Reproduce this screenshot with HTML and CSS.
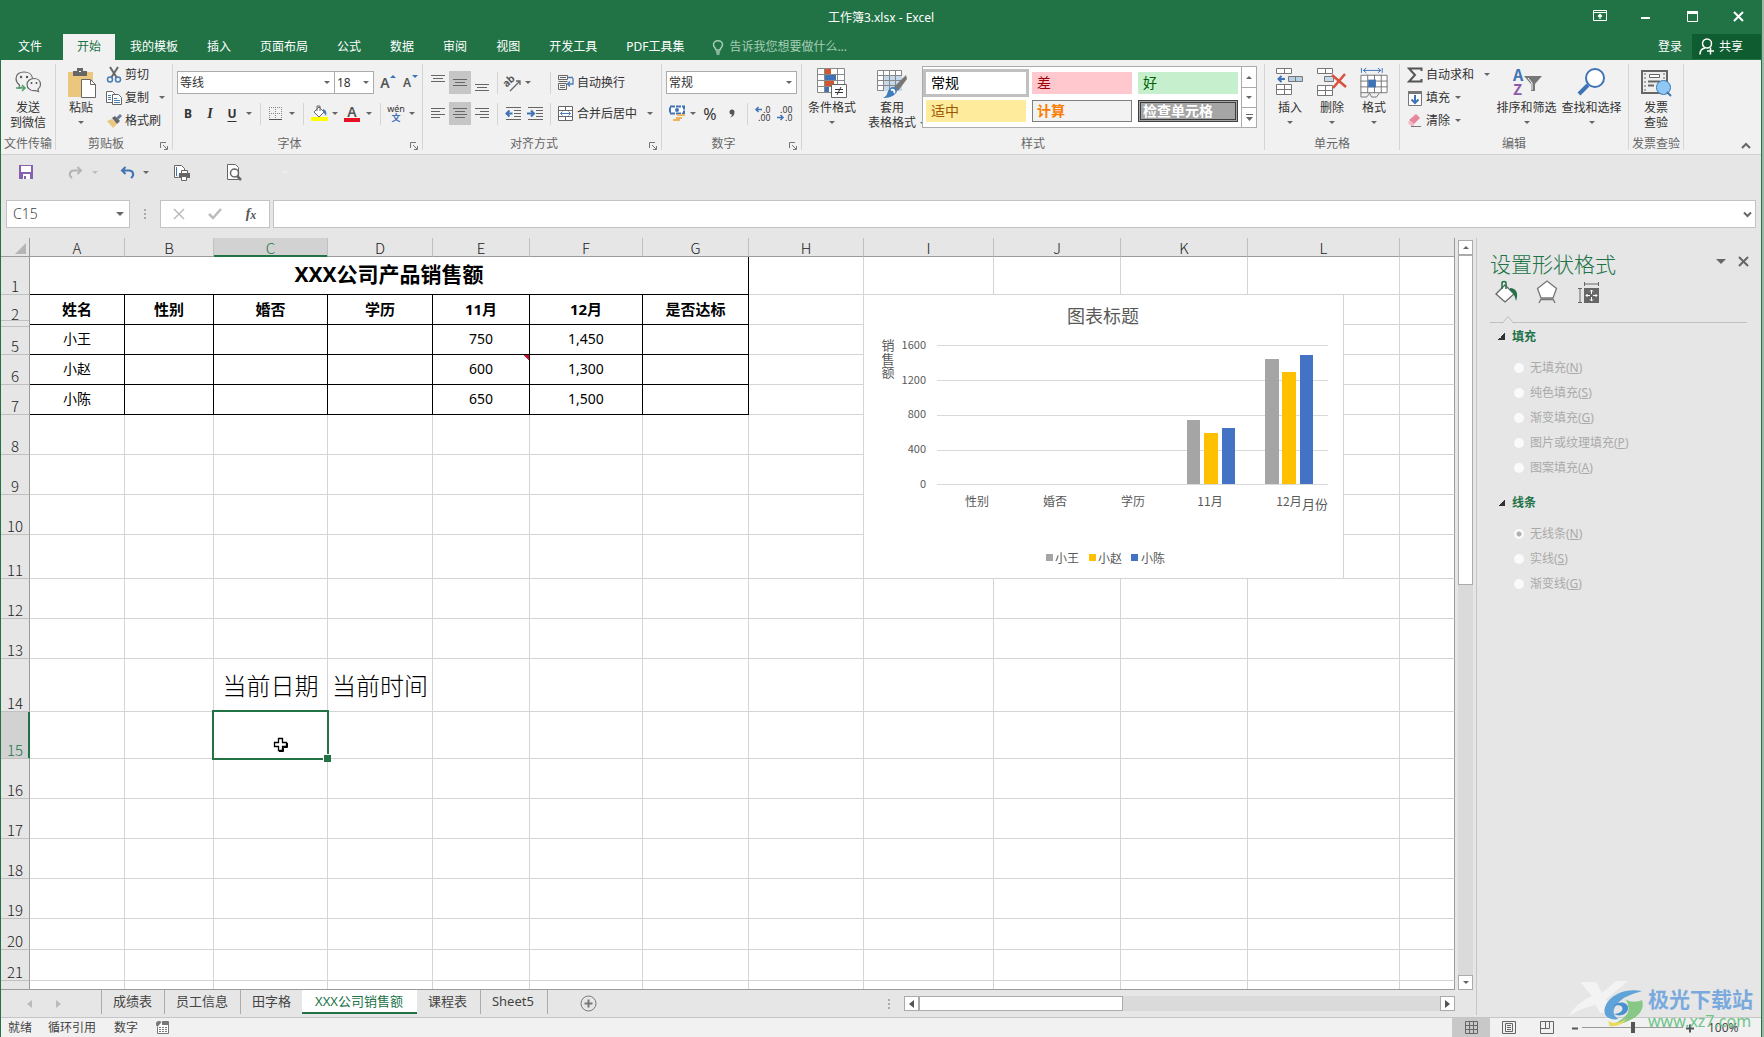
FILE: index.html
```html
<!DOCTYPE html>
<html lang="zh-CN">
<head>
<meta charset="utf-8">
<title>工作簿3.xlsx - Excel</title>
<link rel="stylesheet" href="styles.css">
</head>
<body>
<div class="app">

<header class="titlebar">
  <h1 class="doc-title">工作簿3.xlsx - Excel</h1>
  <div class="window-buttons">
    <button class="win-btn" aria-label="功能区显示选项"><svg width="14" height="12" viewBox="0 0 14 12"><path d="M.5.5h13v10H.5zM.5 2.5h13" fill="none" stroke="#fff"/><path d="M7 9V5M5 6.500l2-2 2 2" fill="none" stroke="#fff" stroke-width="1.300"/></svg></button>
    <button class="win-btn" aria-label="最小化"><svg width="10" height="12" viewBox="0 0 10 12"><path d="M0 8h9" stroke="#fff" stroke-width="2"/></svg></button>
    <button class="win-btn" aria-label="最大化"><svg width="11" height="11" viewBox="0 0 11 11"><path d="M.5 .5h10v10H.5z" fill="none" stroke="#fff"/><path d="M0 1.500h11" stroke="#fff" stroke-width="3"/></svg></button>
    <button class="win-btn" aria-label="关闭"><svg width="11" height="11" viewBox="0 0 11 11"><path d="M1 1l9 9M10 1l-9 9" stroke="#fff" stroke-width="2"/></svg></button>
  </div>
</header>

<nav class="tabs">
  <button class="tab tab-file">文件</button>
  <button class="tab tab-active">开始</button>
  <button class="tab">我的模板</button>
  <button class="tab">插入</button>
  <button class="tab">页面布局</button>
  <button class="tab">公式</button>
  <button class="tab">数据</button>
  <button class="tab">审阅</button>
  <button class="tab">视图</button>
  <button class="tab">开发工具</button>
  <button class="tab">PDF工具集</button>
  <button class="tell-me"><svg width="12" height="15" viewBox="0 0 12 15" fill="none" stroke="#a5cdb5" stroke-width="1.500"><path d="M4 10c0-2-2.500-2.700-2.500-5.300a4.500 4 0 0 1 9 0C10.500 7.300 8 8 8 10zM4 12h4M4.500 14h3"/></svg>告诉我您想要做什么...</button>
  <button class="login">登录</button>
  <button class="share"><svg width="16" height="17" viewBox="0 0 16 17" fill="none" stroke="#fff" stroke-width="1.500"><circle cx="8" cy="5.500" r="4.500"/><path d="M1 16.500c0-4 2-6 5-6.500M8 13h7M11.500 9.500v7"/></svg>共享</button>
</nav>

<section class="ribbon">
  <div class="group g-wechat">
    <div class="group-body center">
      <button class="big">
        <svg width="30" height="30" viewBox="0 0 30 30" fill="none" stroke="#666" stroke-width="1.200"><path d="M9 19l-3 1 .5-3C4 15 3 13 3 10.500 3 6 7 4 11 4c4.500 0 8 2.500 8.500 6"/><path d="M14 16.500c0-3.500 3-6 7-6s6.500 2.500 6.500 6c0 2-1 3.500-2.500 4.500l.5 2.500-3-1c-4.500 1-8.500-2-8.500-6z"/><path d="M3 20h9M9 17l3 3-3 3" stroke="#4fa26d" stroke-width="1.600"/><g fill="#555" stroke="none"><circle cx="8" cy="9" r="1.200"/><circle cx="14" cy="9" r="1.200"/><circle cx="18.500" cy="15" r="1"/><circle cx="23.500" cy="15" r="1"/></g></svg>
        <span>发送<br>到微信</span></button>
    </div>
    <div class="group-label">文件传输</div>
  </div>

  <div class="group g-clip">
    <div class="group-body">
      <button class="big w50">
        <svg width="30" height="30" viewBox="0 0 30 30"><path d="M2 4h25v25H2z" fill="#ebc67d"/><path d="M7 3h4V0h6v3h4v5H7z" fill="#666"/><path d="M13 3.500h2" stroke="#fff"/><path d="M15.500 11.500h9l5 5v13h-14z" fill="#fff" stroke="#666"/><path d="M24.500 11.500v5h5" fill="none" stroke="#666"/></svg>
        <span>粘贴</span><i class="caret"></i></button>
      <div class="stack">
        <button class="small"><svg width="16" height="16" viewBox="0 0 16 16" fill="none"><path d="M4 0l7 11M12 0L5 11" stroke="#666" stroke-width="2"/><circle cx="4" cy="12.500" r="2.500" stroke="#4a7db5" stroke-width="1.500"/><circle cx="12" cy="12.500" r="2.500" stroke="#4a7db5" stroke-width="1.500"/></svg>剪切</button>
        <button class="small"><svg width="16" height="16" viewBox="0 0 16 16" fill="#fff" stroke="#666"><path d="M.5 1.500h6l2 2v9h-8z"/><path d="M6.500 4.500h6l3 3v7h-9z"/><path d="M2 5.500h3M2 7.500h3M2 9.500h3M8 8.500h3M8 10.500h6M8 12.500h6" stroke="#4a7db5"/></svg>复制<i class="caret far"></i></button>
        <button class="small"><svg width="16" height="16" viewBox="0 0 16 16"><path d="M1 8l5-2 5 5-4 4z" fill="#ebc67d"/><path d="M6 5l3-2 5 5-3 3z" fill="#666"/><path d="M10 5l4-4 2 2-4 4z" fill="#667a99"/></svg>格式刷</button>
      </div>
    </div>
    <div class="group-label with-launcher">剪贴板<button class="launcher" aria-label="剪贴板选项"><svg width="8" height="8" viewBox="0 0 8 8" fill="none" stroke="#777"><path d="M.5 6V.5H6M3 3l4 4M7.500 4v3.500H4"/></svg></button></div>
  </div>

  <div class="group g-font">
    <div class="group-body rows">
      <div class="row">
        <label class="combo c-font"><select aria-label="字体"><option>等线</option></select><i class="caret"></i></label>
        <label class="combo c-size"><select aria-label="字号"><option>18</option></select><i class="caret"></i></label>
        <button class="ib grow" aria-label="增大字号"><span class="fa">A</span><i class="mark up"></i></button>
        <button class="ib grow" aria-label="减小字号"><span class="fa fs">A</span><i class="mark down"></i></button>
      </div>
      <div class="row">
        <button class="ib bold">B</button><button class="ib ital">I</button><button class="ib und">U</button><button class="dd" aria-label="下划线选项"><i class="caret"></i></button>
        <i class="sep"></i>
        <button class="ib w20" aria-label="边框"><svg width="14" height="14" viewBox="0 0 14 14" fill="none" stroke="#888" stroke-dasharray="1 1"><path d="M.5 0v13M6.500 0v13M12.500 0v13M0 .5h13M0 6.500h13"/><path d="M0 12.500h13" stroke="#555" stroke-dasharray="none"/></svg></button><button class="dd" aria-label="边框选项"><i class="caret"></i></button>
        <i class="sep"></i>
        <button class="ib w20" aria-label="填充颜色"><svg width="17" height="17" viewBox="0 0 17 17"><path d="M3 7l5-5 5 5-5 5z" fill="#fff" stroke="#666"/><path d="M6 6V1h3v5" fill="none" stroke="#666"/><path d="M12 4c3 1 4 3 3 7-1-2-2-3-3-4z" fill="#4a7db5"/><path d="M0 12h17v4H0z" fill="#ff0"/></svg></button><button class="dd" aria-label="填充颜色选项"><i class="caret"></i></button>
        <button class="ib" aria-label="字体颜色"><span class="fa font-color">A</span></button><button class="dd" aria-label="字体颜色选项"><i class="caret"></i></button>
        <i class="sep"></i>
        <button class="ib w20 wen"><span>wén</span><b>文</b></button><button class="dd" aria-label="拼音选项"><i class="caret"></i></button>
      </div>
    </div>
    <div class="group-label with-launcher">字体<button class="launcher" aria-label="字体选项"><svg width="8" height="8" viewBox="0 0 8 8" fill="none" stroke="#777"><path d="M.5 6V.5H6M3 3l4 4M7.500 4v3.500H4"/></svg></button></div>
  </div>

  <div class="group g-align">
    <div class="group-body rows">
      <div class="row">
        <button class="ib" aria-label="顶端对齐"><svg width="14" height="16" viewBox="0 0 14 16" stroke="#666"><path d="M0 .5h14M2 3.500h10M0 6.500h14"/></svg></button><button class="ib on" aria-label="垂直居中"><svg width="14" height="16" viewBox="0 0 14 16" stroke="#666"><path d="M0 4.500h14M2 7.500h10M0 10.500h14"/></svg></button><button class="ib" aria-label="底端对齐"><svg width="14" height="16" viewBox="0 0 14 16" stroke="#666"><path d="M0 9.500h14M2 12.500h10M0 15.500h14"/></svg></button>
        <i class="sep s9"></i>
        <span class="pair"><button class="ib" aria-label="方向"><svg width="18" height="18" viewBox="0 0 18 18"><text x="1" y="12" transform="rotate(-42 4 11)" font-size="10" font-weight="bold" fill="#555">ab</text><path d="M6 17L16 7M16 11V7h-4" fill="none" stroke="#666" stroke-width="1.300"/></svg></button><button class="dd w8" aria-label="方向选项"><i class="caret"></i></button></span>
        <i class="sep s9"></i>
        <button class="small inrow"><svg width="16" height="16" viewBox="0 0 16 16" fill="none" stroke="#666"><path d="M.5 .5h9v4h-9zM.5 8.500h8v6h-8zM2 2.500h6M2 10.500h5M2 12.500h5M.5 6.500h9"/><path d="M15 3v6H10M12 6.500L9.500 9l2.500 2.500M10 2.500h5" stroke="#4a7db5" stroke-width="1.300"/></svg>自动换行</button>
      </div>
      <div class="row">
        <button class="ib" aria-label="左对齐"><svg width="14" height="11" viewBox="0 0 14 11" stroke="#666"><path d="M0 .5h14M0 3.500h9M0 6.500h14M0 9.500h9"/></svg></button><button class="ib on" aria-label="居中"><svg width="14" height="11" viewBox="0 0 14 11" stroke="#666"><path d="M0 .5h14M2 3.500h10M0 6.500h14M2 9.500h10"/></svg></button><button class="ib" aria-label="右对齐"><svg width="14" height="11" viewBox="0 0 14 11" stroke="#666"><path d="M0 .5h14M5 3.500h9M0 6.500h14M5 9.500h9"/></svg></button>
        <i class="sep s9"></i>
        <span class="pair"><button class="ib" aria-label="减少缩进"><svg width="17" height="14" viewBox="0 0 17 14" stroke="#666"><path d="M1 .5h15M9 3.500h7M9 6.500h7M9 9.500h7M1 12.500h15"/><path d="M7.500 6.500H2M4.500 3.500l-3 3 3 3" fill="none" stroke="#3f73b5" stroke-width="2"/></svg></button><button class="ib" aria-label="增加缩进"><svg width="17" height="14" viewBox="0 0 17 14" stroke="#666"><path d="M1 .5h15M9 3.500h7M9 6.500h7M9 9.500h7M1 12.500h15"/><path d="M0 6.500h6M4 3.500l3 3-3 3" fill="none" stroke="#3f73b5" stroke-width="2"/></svg></button></span>
        <i class="sep s9"></i>
        <button class="small inrow"><svg width="16" height="16" viewBox="0 0 16 16" fill="#fff" stroke="#666"><path d="M.5 .5h14v14H.5zM.5 4.500h14M.5 10.500h14M7.500 .5v4M7.500 10.500v4"/><path d="M2.500 7.500h10M4.500 5.500l-2 2 2 2M10.500 5.500l2 2-2 2" fill="none" stroke="#4a7db5"/></svg>合并后居中<i class="caret near"></i></button>
      </div>
    </div>
    <div class="group-label with-launcher">对齐方式<button class="launcher" aria-label="对齐选项"><svg width="8" height="8" viewBox="0 0 8 8" fill="none" stroke="#777"><path d="M.5 6V.5H6M3 3l4 4M7.500 4v3.500H4"/></svg></button></div>
  </div>

  <div class="group g-num">
    <div class="group-body rows">
      <div class="row">
        <label class="combo c-num"><select aria-label="数字格式"><option>常规</option></select><i class="caret"></i></label>
      </div>
      <div class="row">
        <button class="ib" aria-label="会计数字格式"><svg width="17" height="17" viewBox="0 0 17 17"><path d="M1 1.500h14v7H1z" fill="#fff" stroke="#3f73b5" stroke-width="2" stroke-dasharray="5 1"/><circle cx="8" cy="5" r="2" fill="#3f73b5"/><path d="M8 9h8v2H8zM7 12h6v2H7zM4 14h7v2H4z" fill="#ebb663"/></svg></button><button class="dd w10" aria-label="会计格式选项"><i class="caret"></i></button>
        <button class="ib w24 pct">%</button><button class="ib w20" aria-label="千位分隔样式"><svg width="6" height="9" viewBox="0 0 6 9"><path d="M5.500 3C5.500 6 4 8 1 8.500 2.500 7.500 3 6.500 3 5.500A2.500 2.500 0 1 1 5.500 3z" fill="#555"/></svg></button>
        <i class="sep s10"></i>
        <button class="ib" aria-label="增加小数位数"><svg width="18" height="18" viewBox="0 0 18 18"><path d="M8 4.500H2M4.500 2L2 4.500 4.500 7" fill="none" stroke="#3f73b5" stroke-width="1.500"/><text x="9" y="8" font-size="9" fill="#444">.0</text><text x="4" y="16" font-size="9" fill="#444">.00</text></svg></button><button class="ib" aria-label="减少小数位数"><svg width="18" height="18" viewBox="0 0 18 18"><path d="M1 12.500h6M4.500 10L7 12.500 4.500 15" fill="none" stroke="#3f73b5" stroke-width="1.500"/><text x="4" y="8" font-size="9" fill="#444">.00</text><text x="9" y="16" font-size="9" fill="#444">.0</text></svg></button>
      </div>
    </div>
    <div class="group-label with-launcher">数字<button class="launcher" aria-label="数字选项"><svg width="8" height="8" viewBox="0 0 8 8" fill="none" stroke="#777"><path d="M.5 6V.5H6M3 3l4 4M7.500 4v3.500H4"/></svg></button></div>
  </div>

  <div class="group g-style">
    <div class="group-body">
      <button class="big w60">
        <svg width="30" height="30" viewBox="0 0 30 30"><path d="M.5 .5h27v24H.5z" fill="#fff" stroke="#888"/><path d="M7.500 0v25M20.500 0v25M0 6.500h28M0 12.500h28M0 18.500h28" stroke="#888"/><path d="M8 1h6v5H8zM8 13h9v5H8z" fill="#d2572f"/><path d="M8 7h11v5H8zM8 19h4v5H8z" fill="#3f73b5"/><path d="M14.500 16.500h15v13h-15z" fill="#fff" stroke="#666"/><path d="M18 21.500h8M18 24.500h8M24 19l-4 8" stroke="#333"/></svg>
        <span>条件格式</span><i class="caret"></i></button>
      <button class="big w60">
        <svg width="30" height="30" viewBox="0 0 30 30"><path d="M.5 2.500h24v20H.5z" fill="#fff" stroke="#888"/><path d="M7 8h18v15H7z" fill="#c5d9ec"/><path d="M6.500 2v21M12.500 2v21M18.500 2v21M0 7.500h25M0 12.500h25M0 17.500h25" stroke="#888"/><path d="M29 7L17 19l4 4 9-12z" fill="#777"/><path d="M16 19c4 0 5 4 3 6-3 4-8 5-13 5 4-2 4-4 5-7 1-2 3-4 5-4z" fill="#3f7dba"/><path d="M14 22c3-1 4 1 3 3" stroke="#fff" stroke-width="2" fill="none"/></svg>
        <span>套用<br>表格格式<i class="caret side"></i></span></button>
      <div class="gallery">
        <div class="swatches">
          <button class="sw sw-normal">常规</button><button class="sw sw-bad">差</button><button class="sw sw-good">好</button>
          <button class="sw sw-neutral">适中</button><button class="sw sw-calc">计算</button><button class="sw sw-check">检查单元格</button>
        </div>
        <div class="gallery-scroll">
          <button aria-label="上一行"><i class="caret flip"></i></button><button aria-label="下一行"><i class="caret"></i></button><button aria-label="更多"><svg width="7" height="7" viewBox="0 0 7 7" fill="#666"><path d="M0 0h7v1H0zM0 3h7L3.500 7z"/></svg></button>
        </div>
      </div>
    </div>
    <div class="group-label">样式</div>
  </div>

  <div class="group g-cells">
    <div class="group-body">
      <button class="big w42">
        <svg width="28" height="30" viewBox="0 0 28 30" fill="#fff" stroke="#777"><path d="M.5 .5h15v5H.5zM8.500 .5v5M.5 16.500h15v10H.5zM8.500 16.500v10M.5 21.500h15"/><path d="M12.500 8.500h14v5h-14zM19.500 8.500v5" fill="#b8d0e4"/><path d="M9 11H3M5.500 8L2.500 11l3 3" stroke="#3f73b5" stroke-width="2" fill="none"/></svg>
        <span>插入</span><i class="caret"></i></button>
      <button class="big w42">
        <svg width="30" height="30" viewBox="0 0 30 30" fill="#fff" stroke="#777"><path d="M.5 .5h15v5H.5zM8.500 .5v5M.5 17.500h15v10H.5zM8.500 17.500v10M.5 22.500h15"/><path d="M7.500 8.500h9v5h-9z" fill="#c5d9ec"/><path d="M15 7l14 12M28 6L16 20" stroke="#d9503c" stroke-width="2.500"/></svg>
        <span>删除</span><i class="caret"></i></button>
      <button class="big w42">
        <svg width="28" height="31" viewBox="0 0 28 31" fill="none" stroke="#777"><path d="M.5 7.500h27v18H.5z" fill="#fff"/><path d="M7.500 7v19M14.500 7v19M21.500 7v19M0 13.500h28M0 19.500h28"/><path d="M.5 25v5h6l3-4 2 4h5l3-4"/><path d="M8 12h8v8H8z" fill="#3f73b5" stroke="none"/><path d="M1 0v5M22.500 0v5M3 2.500h18M6 0L3 2.500 6 5M18 0l3 2.500L18 5" stroke="#3f73b5"/></svg>
        <span>格式</span><i class="caret"></i></button>
    </div>
    <div class="group-label">单元格</div>
  </div>

  <div class="group g-edit">
    <div class="group-body">
      <div class="stack">
        <button class="small"><svg width="16" height="16" viewBox="0 0 16 16"><path d="M14.500 4V1.500H2L8 8l-6 6.500h12.500V12" fill="none" stroke="#555" stroke-width="2"/></svg>自动求和<i class="caret near"></i></button>
        <button class="small"><svg width="16" height="16" viewBox="0 0 16 16"><path d="M1.500 1.500h13v14h-13z" fill="#fff" stroke="#777"/><path d="M1 1h14v3H1z" fill="#777"/><path d="M8 5v8M4.500 9.500L8 13l3.500-3.500" fill="none" stroke="#3f73b5" stroke-width="2"/></svg>填充<i class="caret"></i></button>
        <button class="small"><svg width="16" height="16" viewBox="0 0 16 16"><path d="M9 1l4 4-6 6-5-4z" fill="#e6879b"/><path d="M2 7.500L1 10l3 3h3V11z" fill="#f2b9c4"/><path d="M4 13.500h10" stroke="#777"/></svg>清除<i class="caret"></i></button>
      </div>
      <button class="big w65">
        <svg width="30" height="30" viewBox="0 0 30 30"><text x="1" y="13" font-size="16" font-weight="bold" fill="#3f73b5">A</text><text x="1" y="27" font-size="15" font-weight="bold" fill="#9058a8">Z</text><path d="M12 8h18l-7 8v7h-4v-7z" fill="#777"/><path d="M16 10l4 5v7" stroke="#fff" fill="none"/></svg>
        <span>排序和筛选</span><i class="caret"></i></button>
      <button class="big w65">
        <svg width="30" height="30" viewBox="0 0 30 30"><circle cx="18" cy="10" r="9" fill="#fff" stroke="#3f73b5" stroke-width="2"/><path d="M11 17L2 26" stroke="#3f73b5" stroke-width="4"/></svg>
        <span>查找和选择</span><i class="caret"></i></button>
    </div>
    <div class="group-label">编辑</div>
  </div>

  <div class="group g-inv">
    <div class="group-body center">
      <button class="big">
        <svg width="32" height="30" viewBox="0 0 32 30"><path d="M2 3h25v22H2z" fill="#eee" stroke="#666" stroke-width="2"/><path d="M5 5v19M24 5v10" stroke="#666" stroke-dasharray="2 2"/><path d="M9.500 6.500h10v3h-10z" fill="#fff" stroke="#666"/><path d="M8 13.500h12M8 17.500h6" stroke="#666" stroke-width="2"/><circle cx="23.500" cy="19.500" r="7" fill="#8fc8f5" stroke="#3f73b5"/><path d="M27 24l4 4" stroke="#3f73b5" stroke-width="2"/></svg>
        <span>发票<br>查验</span></button>
    </div>
    <div class="group-label">发票查验</div>
  </div>
  <button class="collapse" aria-label="折叠功能区"><svg width="10" height="7" viewBox="0 0 10 7"><path d="M1 6l4-4 4 4" fill="none" stroke="#666" stroke-width="2"/></svg></button>
</section>

<div class="quickbar">
  <button class="q q-save" aria-label="保存"><svg width="14" height="14" viewBox="0 0 14 14"><path d="M0 0h14v14H0z" fill="#8661ad"/><path d="M2 1h10v6H2zM4 9h7v5H4z" fill="#fff"/><path d="M5 11h2v3H5z" fill="#8661ad"/></svg></button>
  <button class="q q-redo" aria-label="恢复"><svg width="15" height="13" viewBox="0 0 15 13" fill="none" stroke="#b5b5b5" stroke-width="2"><path d="M13 4.500H6C2 4.500 0 9 4 12M9.500 1L13 4.500 9.500 8"/></svg></button><i class="caret pale"></i>
  <button class="q q-undo" aria-label="撤消"><svg width="15" height="13" viewBox="0 0 15 13" fill="none" stroke="#3f73b5" stroke-width="2"><path d="M2 4.500h7c4 0 6 4.500 2 7.500M5.500 1L2 4.500 5.500 8"/></svg></button><i class="caret"></i>
  <button class="q q-print" aria-label="快速打印"><svg width="17" height="17" viewBox="0 0 17 17" fill="#fff" stroke="#666"><path d="M1.500 13.500V1.500h7l3 3v3"/><path d="M1.500 13.500h4" /><path d="M3.500 3v9" stroke="#3f73b5"/><path d="M6 9h11v5H6z" fill="#666" stroke="none"/><path d="M8.500 6.500h6v3h-6zM8.500 12.500h5v4h-5z"/></svg></button>
  <button class="q q-preview" aria-label="打印预览"><svg width="15" height="17" viewBox="0 0 15 17" fill="#fff" stroke="#666"><path d="M.5 15.500V.5h8l3 3v12z"/><circle cx="7.500" cy="9" r="4" stroke-width="1.500"/><path d="M10 12l4 4" stroke-width="2.500"/></svg></button>
  <i class="caret ghost"></i>
</div>

<div class="formulabar">
  <label class="namebox"><input aria-label="名称框" value="C15"><i class="caret"></i></label>
  <i class="dots"></i>
  <div class="fx-box">
    <button aria-label="取消"><svg width="12" height="12" viewBox="0 0 12 12"><path d="M1 1l10 10M11 1L1 11" stroke="#bbb" stroke-width="1.500"/></svg></button>
    <button aria-label="输入"><svg width="14" height="12" viewBox="0 0 14 12"><path d="M1 6l4 4 8-9" fill="none" stroke="#bbb" stroke-width="2.500"/></svg></button>
    <button class="fx" aria-label="插入函数">f<sub>x</sub></button>
  </div>
  <label class="formula"><input aria-label="编辑栏"><svg width="9" height="7" viewBox="0 0 9 7"><path d="M1 1.500l3.500 3.500L8 1.500" fill="none" stroke="#666" stroke-width="2"/></svg></label>
</div>

<main class="workspace">
  <div class="book">
    <div class="sheet-row">
      <div class="sheet">
        <table class="grid">
          <colgroup><col class="c-head"><col class="c-a"><col class="c-b"><col class="c-c"><col class="c-d"><col class="c-e"><col class="c-f"><col class="c-g"><col class="c-h"><col class="c-i"><col class="c-j"><col class="c-k"><col class="c-l"><col></colgroup>
          <thead><tr><th class="corner"><svg width="11" height="11" viewBox="0 0 11 11"><path d="M11 0v11H0z" fill="#b5b5b5"/></svg></th><th>A</th><th>B</th><th class="sel">C</th><th>D</th><th>E</th><th>F</th><th>G</th><th>H</th><th>I</th><th>J</th><th>K</th><th>L</th><th></th></tr></thead>
          <tbody>
          <tr class="h38 data"><th>1</th><td colspan="7" class="title">XXX公司产品销售额</td><td></td><td></td><td></td><td></td><td></td><td></td></tr>
          <tr class="h30 data heads"><th class="hidden-after">2</th><td>姓名</td><td>性别</td><td>婚否</td><td>学历</td><td>11月</td><td>12月</td><td>是否达标</td><td></td><td></td><td></td><td></td><td></td><td></td></tr>
          <tr class="h30 data"><th>5</th><td>小王</td><td></td><td></td><td></td><td>750</td><td>1,450</td><td></td><td></td><td></td><td></td><td></td><td></td><td></td></tr>
          <tr class="h30 data"><th>6</th><td>小赵</td><td></td><td></td><td></td><td class="noted">600</td><td>1,300</td><td></td><td></td><td></td><td></td><td></td><td></td><td></td></tr>
          <tr class="h30 data"><th>7</th><td>小陈</td><td></td><td></td><td></td><td>650</td><td>1,500</td><td></td><td></td><td></td><td></td><td></td><td></td><td></td></tr>
          <tr class="h40"><th>8</th><td></td><td></td><td></td><td></td><td></td><td></td><td></td><td></td><td></td><td></td><td></td><td></td><td></td></tr>
          <tr class="h40"><th>9</th><td></td><td></td><td></td><td></td><td></td><td></td><td></td><td></td><td></td><td></td><td></td><td></td><td></td></tr>
          <tr class="h40"><th>10</th><td></td><td></td><td></td><td></td><td></td><td></td><td></td><td></td><td></td><td></td><td></td><td></td><td></td></tr>
          <tr class="h44"><th>11</th><td></td><td></td><td></td><td></td><td></td><td></td><td></td><td></td><td></td><td></td><td></td><td></td><td></td></tr>
          <tr class="h40"><th>12</th><td></td><td></td><td></td><td></td><td></td><td></td><td></td><td></td><td></td><td></td><td></td><td></td><td></td></tr>
          <tr class="h40"><th>13</th><td></td><td></td><td></td><td></td><td></td><td></td><td></td><td></td><td></td><td></td><td></td><td></td><td></td></tr>
          <tr class="h53 large"><th>14</th><td></td><td></td><td>当前日期</td><td>当前时间</td><td></td><td></td><td></td><td></td><td></td><td></td><td></td><td></td><td></td></tr>
          <tr class="h47"><th class="sel">15</th><td></td><td></td><td class="active-cell"><div class="selection"><svg class="cross" width="16" height="16" viewBox="0 0 16 16"><path d="M5.500 1.500h4v4h4v4h-4v4h-4v-4h-4v-4h4z" fill="#fff" stroke="#000" stroke-width="1.300"/><path d="M6 14.500h4.500v-4h4V6" fill="none" stroke="#000"/></svg></div></td><td></td><td></td><td></td><td></td><td></td><td></td><td></td><td></td><td></td><td></td></tr>
          <tr class="h40"><th>16</th><td></td><td></td><td></td><td></td><td></td><td></td><td></td><td></td><td></td><td></td><td></td><td></td><td></td></tr>
          <tr class="h40"><th>17</th><td></td><td></td><td></td><td></td><td></td><td></td><td></td><td></td><td></td><td></td><td></td><td></td><td></td></tr>
          <tr class="h40"><th>18</th><td></td><td></td><td></td><td></td><td></td><td></td><td></td><td></td><td></td><td></td><td></td><td></td><td></td></tr>
          <tr class="h40"><th>19</th><td></td><td></td><td></td><td></td><td></td><td></td><td></td><td></td><td></td><td></td><td></td><td></td><td></td></tr>
          <tr class="h31"><th>20</th><td></td><td></td><td></td><td></td><td></td><td></td><td></td><td></td><td></td><td></td><td></td><td></td><td></td></tr>
          <tr class="h31"><th>21</th><td></td><td></td><td></td><td></td><td></td><td></td><td></td><td></td><td></td><td></td><td></td><td></td><td></td></tr>
          <tr class="h31"><th></th><td></td><td></td><td></td><td></td><td></td><td></td><td></td><td></td><td></td><td></td><td></td><td></td><td></td></tr>
          </tbody>
        </table>
        <svg class="chart" width="481" height="285" viewBox="0 0 481 285" role="img" aria-label="图表标题">
          <path d="M.5 .5h480v284H.5z" fill="#fff" stroke="#d4d4d4"/>
          <text class="ct" x="240" y="29">图表标题</text>
          <path d="M74 51.500h391M74 86.500h391M74 121.500h391M74 156.500h391M74 190.500h391" stroke="#d9d9d9"/>
          <g class="ax"><text x="63" y="55">1600</text><text x="63" y="90">1200</text><text x="63" y="124">800</text><text x="63" y="159">400</text><text x="63" y="194">0</text></g>
          <g class="vt"><text x="25" y="56">销</text><text x="25" y="70">售</text><text x="25" y="83">额</text></g>
          <path d="M324 126h13v64h-13zM402 65h14v125h-14z" fill="#a5a5a5"/>
          <path d="M341 139h14v51h-14zM419 78h14v112h-14z" fill="#ffc000"/>
          <path d="M359 134h13v56h-13zM437 61h13v129h-13z" fill="#4472c4"/>
          <g class="cat"><text x="114" y="212">性别</text><text x="192" y="212">婚否</text><text x="270" y="212">学历</text><text x="347" y="212">11月</text><text x="426" y="212">12月</text></g>
          <text class="xt" x="452" y="215">月份</text>
          <path d="M183 260h7v7h-7z" fill="#a5a5a5"/><path d="M226 260h7v7h-7z" fill="#ffc000"/><path d="M268 260h7v7h-7z" fill="#4472c4"/>
          <g class="lg"><text x="192" y="269">小王</text><text x="235" y="269">小赵</text><text x="278" y="269">小陈</text></g>
        </svg>
      </div>
      <div class="vscroll">
        <button aria-label="向上滚动"><i class="caret flip"></i></button>
        <div class="vthumb"></div>
        <div class="vtrack"></div>
        <button aria-label="向下滚动"><i class="caret"></i></button>
      </div>
    </div>
    <div class="sheet-tabs">
      <div class="tab-nav"><i class="tri left pale-tri"></i><i class="tri right pale-tri"></i></div>
      <button class="st">成绩表</button><button class="st">员工信息</button><button class="st last">田字格</button><button class="st current">XXX公司销售额</button><button class="st after">课程表</button><button class="st after">Sheet5</button>
      <button class="add-sheet" aria-label="新工作表"><svg width="17" height="17" viewBox="0 0 17 17" fill="none" stroke="#777"><circle cx="8.500" cy="8.500" r="7.500"/><path d="M4.500 8.500h8M8.500 4.500v8" stroke-width="2"/></svg></button>
      <i class="dots grip"></i>
      <div class="hscroll">
        <button aria-label="向左滚动"><i class="tri left"></i></button>
        <div class="hthumb"></div>
        <div class="htrack"></div>
        <button aria-label="向右滚动"><i class="tri right"></i></button>
      </div>
    </div>
  </div>

  <aside class="pane">
    <div class="pane-head">
      <h2>设置形状格式</h2>
      <button aria-label="任务窗格选项"><i class="caret big-caret"></i></button>
      <button aria-label="关闭窗格"><svg width="11" height="11" viewBox="0 0 11 11"><path d="M1 1l9 9M10 1L1 10" stroke="#666" stroke-width="2"/></svg></button>
    </div>
    <div class="pane-icons">
      <button aria-label="填充与线条"><svg width="24" height="22" viewBox="0 0 24 22"><path d="M1 13l9-9 9 9-9 8z" fill="#fff" stroke="#666" stroke-width="1.300"/><path d="M7 8V2c0-2 4-2 4 0v6" fill="none" stroke="#217346" stroke-width="1.500"/><path d="M15 7c6 0 9 5 6 13-1-4-2-8-6-11z" fill="#217346"/></svg></button>
      <button aria-label="效果"><svg width="22" height="24" viewBox="0 0 22 24" fill="#fff" stroke="#777" stroke-width="1.300"><path d="M11 1l9.500 7.500L17 18H5L1.500 8.500z"/><path d="M5 19.500h12M5 19l-2 4M17 19l2 4"/></svg></button>
      <button aria-label="大小与属性"><svg width="22" height="22" viewBox="0 0 22 22"><path d="M7 7h15v15H7z" fill="#666"/><path d="M3 7v15M1 7.500h4M1 21.500h4M7 3h15M7.500 1v4M21.500 1v4" stroke="#666"/><path d="M14.500 9v4M14.500 16v4M9 14.500h4M16 14.500h4M13 10.500l1.500-1.500 1.500 1.500M13 18.500l1.500 1.500 1.500-1.500M10.500 13L9 14.500l1.500 1.500M18.500 13l1.500 1.500-1.500 1.500" fill="none" stroke="#fff"/></svg></button>
    </div>
    <div class="pane-rule"><svg width="14" height="8" viewBox="0 0 14 8"><path d="M0 7.500h1l6-7 6 7h1v.5H0z" fill="#e6e6e6"/><path d="M1 7.500l6-7 6 7" fill="none" stroke="#c0c0c0"/></svg></div>
    <fieldset class="options">
      <legend>填充</legend>
      <label><input type="radio" name="fill" disabled><span>无填充(<u>N</u>)</span></label>
      <label><input type="radio" name="fill" disabled><span>纯色填充(<u>S</u>)</span></label>
      <label><input type="radio" name="fill" disabled><span>渐变填充(<u>G</u>)</span></label>
      <label><input type="radio" name="fill" disabled><span>图片或纹理填充(<u>P</u>)</span></label>
      <label><input type="radio" name="fill" disabled><span>图案填充(<u>A</u>)</span></label>
    </fieldset>
    <fieldset class="options">
      <legend>线条</legend>
      <label><input type="radio" name="line" disabled checked><span>无线条(<u>N</u>)</span></label>
      <label><input type="radio" name="line" disabled><span>实线(<u>S</u>)</span></label>
      <label><input type="radio" name="line" disabled><span>渐变线(<u>G</u>)</span></label>
    </fieldset>
  </aside>
</main>

<footer class="status">
  <span class="s1">就绪</span><span class="s2">循环引用</span><span class="s3">数字</span>
  <svg width="13" height="13" viewBox="0 0 13 13"><circle cx="3" cy="3" r="3" fill="#777"/><path d="M6 .5h6.500v12H1.500V6" fill="#fff" stroke="#777"/><path d="M6 1h6v3H6z" fill="#777"/><path d="M3 6.500h8M3 8.500h8M3 10.500h8" stroke="#777" stroke-dasharray="2 1"/></svg>
  <div class="views">
    <button class="view on" aria-label="普通"><svg width="13" height="13" viewBox="0 0 13 13" fill="none" stroke="#666"><path d="M.5 .5h12v12H.5zM4.500 0v13M8.500 0v13M0 4.500h13M0 8.500h13"/></svg></button>
    <button class="view" aria-label="页面布局"><svg width="14" height="13" viewBox="0 0 14 13" fill="none" stroke="#666"><path d="M.5 .5h13v12H.5zM3.500 2.500h7v8h-7zM5 4.500h4M5 6.500h4M5 8.500h4"/></svg></button>
    <button class="view" aria-label="分页预览"><svg width="14" height="13" viewBox="0 0 14 13" fill="none" stroke="#666"><path d="M.5 .5h13v12H.5zM5.500 1v6.500M9.500 1v6.500M.5 7.500h9"/></svg></button>
  </div>
  <button class="zoom-btn" aria-label="缩小"><svg width="10" height="10" viewBox="0 0 10 10"><path d="M2 5.500h6" stroke="#555" stroke-width="2"/></svg></button>
  <input class="zoom" type="range" min="0" max="100" value="50" aria-label="显示比例">
  <button class="zoom-btn" aria-label="放大"><svg width="10" height="10" viewBox="0 0 10 10"><path d="M1 5.500h8M5 1.500v8" stroke="#555" stroke-width="2"/></svg></button>
  <span class="percent">100%</span>
</footer>

<div class="watermark">
  <svg width="80" height="50" viewBox="0 0 80 50"><path d="M12 3h16l6 11 14-12h12L38 20l8 14H32l-4-8C18 28 8 32 0 38 6 28 14 21 24 17z" fill="#f6f6f6" opacity=".8"/><path d="M74 12C60 9 42 14 37 28c-3 10 6 14 14 12-7-3-7-10-1-16 5-6 14-9 24-12z" fill="#5fa3d8"/><path d="M45 27c6-6 16-4 15 3-1 6-9 8-14 5 6 0 10-4 8-7-1-2-5-2-9-1z" fill="#4a8fd0"/><path d="M57 20c6 4 13 3 17 1 4 12-8 23-34 26 14-5 23-12 20-20 0-3-1-5-3-7z" fill="#7cc47c" opacity=".9"/><path d="M40 42c6 3 12 2 18-2-2 5-10 8-16 7z" fill="#e8dc5a"/></svg>
  <p><strong>极光下载站</strong><span>www.xz7.com</span></p>
</div>
</div>
</body>
</html>
```
FILE: styles.css
```css
* { box-sizing: border-box; }

body {
  margin: 0;
  background: #9fb8a8;
  color: #444;
  font: 12px/16px "Noto Sans", "Noto Sans CJK SC", sans-serif;
}

button, input, select {
  margin: 0;
  padding: 0;
  border: 0;
  background: none;
  color: inherit;
  font: inherit;
  border-radius: 0;
}

svg { display: block; flex: none; overflow: visible; }
svg text { font-family: "Noto Sans CJK SC", sans-serif; }

.app {
  position: relative;
  display: flex;
  flex-direction: column;
  height: 100vh;
  margin-right: 2px;
  border: solid #217346;
  border-width: 0 1px;
  background: #e6e6e6;
  overflow: hidden;
}

/* Carets */
.caret {
  flex: none;
  width: 0;
  height: 0;
  border: 3px solid transparent;
  border-top-color: #666;
  border-bottom-width: 0;
}
.caret.flip { border-top-width: 0; border-bottom: 3px solid #666; }
.caret.pale { border-top-color: #bbb; }
.caret.ghost { border-top-color: #eee; }
.caret.big-caret { display: block; border-width: 5px 5px 0; }
.tri { width: 0; height: 0; border: 4px solid transparent; }
.tri.left { border-right: 5px solid #555; border-left: 0; }
.tri.right { border-left: 5px solid #555; border-right: 0; }
.tri.left.pale-tri { border-right-color: #bbb; }
.tri.right.pale-tri { border-left-color: #bbb; }

/* Title bar */
.titlebar {
  position: relative;
  flex: none;
  display: flex;
  justify-content: center;
  height: 34px;
  background: #217346;
  color: #fff;
}
.doc-title { margin: 0; font-size: 12px; line-height: 36px; font-weight: 400; }
.window-buttons { position: absolute; right: 0; top: 0; display: flex; }
.win-btn { display: grid; place-items: center; width: 46px; height: 32px; }

/* Ribbon tabs */
.tabs {
  flex: none;
  display: flex;
  gap: 1px;
  height: 26px;
  padding-left: 3px;
  background: #217346;
  color: #fff;
}
.tab { padding: 0 14px; white-space: nowrap; line-height: 24px; }
.tab-file { margin-right: 6px; }
.tab-active { background: #f1f1f1; color: #217346; }
.tell-me { display: flex; align-items: center; gap: 5px; margin-left: 13px; color: #a5cdb5; white-space: nowrap; }
.login { margin-left: auto; margin-right: 9px; }
.share {
  display: flex;
  align-items: center;
  gap: 4px;
  width: 69px;
  height: 25px;
  padding-left: 7px;
  background: #0e5c2f;
}

/* Ribbon */
.ribbon {
  position: relative;
  flex: none;
  display: flex;
  height: 95px;
  background: #f1f1f1;
  border-bottom: 1px solid #d0d0d0;
  color: #333;
}
.group {
  flex: none;
  display: flex;
  flex-direction: column;
  height: 86px;
  margin-top: 4px;
  border-right: 1px solid #d5d5d5;
}
.g-wechat { width: 55px; }
.g-clip { width: 117px; }
.g-font { width: 250px; }
.g-align { width: 239px; }
.g-num { width: 140px; }
.g-style { width: 463px; }
.g-cells { width: 135px; }
.g-edit { width: 229px; }
.g-inv { width: 55px; }
.group-body { display: flex; height: 70px; flex: none; }
.center { justify-content: center; }
.g-cells .group-body { padding-left: 4px; }
.g-edit .group-body { padding-left: 7px; }
.rows { flex-direction: column; gap: 8px; padding: 7px 0 0 4px; }
.row { display: flex; align-items: center; height: 23px; }
.group-label {
  position: relative;
  height: 16px;
  color: #666;
  text-align: center;
  line-height: 20px;
  white-space: nowrap;
}
.with-launcher { padding-right: 16px; }
.launcher { position: absolute; right: 4px; top: 8px; }

.big {
  display: flex;
  flex-direction: column;
  align-items: center;
  padding-top: 4px;
  line-height: 15px;
  white-space: nowrap;
}
.big > svg { height: 30px; }
.big > span { margin-top: 2px; }
.big > .caret { margin-top: 6px; }
.w50 { width: 50px; }
.w60 { width: 60px; }
.w42 { width: 42px; }
.w65 { width: 65px; }
.side { display: inline-block; margin: 0 -10px 2px 4px; }

.stack { display: flex; flex-direction: column; }
.small { display: flex; align-items: center; gap: 3px; height: 23px; line-height: 14px; white-space: nowrap; }
.small .caret { margin-left: 2px; }
.small .far { margin-left: 7px; }
.small .near { margin-left: 7px; }
.g-edit .stack { width: 87px; }
.stack .small { padding-bottom: 2px; }
.inrow { padding-left: 3px; }

.combo { position: relative; display: flex; }
.combo select {
  appearance: none;
  width: 100%;
  height: 23px;
  padding: 0 2px;
  background: #fff;
  border: 1px solid #ababab;
  line-height: 20px;
}
.combo .caret { position: absolute; right: 5px; top: 10px; }
.c-font { width: 158px; }
.c-size { width: 40px; margin-left: -1px; }
.c-num { width: 131px; }

.ib { flex: none; display: grid; place-items: center; width: 22px; height: 23px; }
.ib.on { background: #c6c6c6; }
.ib.w20 { width: 20px; }
.ib.w24 { width: 24px; }
.dd { display: grid; place-items: center; flex: none; width: 12px; height: 23px; }
.dd.w8 { width: 8px; }
.dd.w10 { width: 10px; }
.sep { flex: none; width: 11px; height: 22px; background: linear-gradient(#d5d5d5, #d5d5d5) center / 1px 100% no-repeat; }
.sep.s9 { width: 9px; }
.sep.s10 { width: 10px; }
.pair { display: flex; width: 44px; }
.bold { font-weight: 700; font-size: 12px; }
.ital { font: italic 700 14px "Liberation Serif", serif; }
.und { font-weight: 700; font-size: 12px; text-decoration: underline; text-underline-offset: 3px; }
.fa { font-weight: 600; font-size: 14px; color: #555; }
.fs { font-size: 12px; }
.font-color { height: 16px; width: 16px; line-height: 12px; border-bottom: 4px solid #e81123; }
.grow { position: relative; }
.mark { position: absolute; right: 0; top: 4px; border: 3px solid transparent; }
.mark.up { border-top: 0; border-bottom-color: #3f73b5; }
.mark.down { border-bottom: 0; border-top-color: #3f73b5; }
.wen { align-content: center; font-size: 9px; line-height: 8px; }
.wen b { color: #3f73b5; font-size: 9px; line-height: 9px; }
.pct { font-size: 16px; }

.gallery { display: flex; width: 335px; height: 62px; margin-top: 2px; background: #fff; border: 1px solid #ababab; }
.swatches {
  flex: 1;
  display: grid;
  grid-template-columns: repeat(3, 100px);
  grid-template-rows: 22px 22px;
  gap: 6px;
  padding: 5px 3px;
}
.sw { padding-left: 5px; text-align: left; font-size: 14px; line-height: 18px; }
.sw-normal { outline: 3px solid #c0c0c0; color: #000; }
.sw-bad { background: #ffc7ce; color: #9c0006; }
.sw-good { background: #c6efce; color: #006100; }
.sw-neutral { background: #ffeb9c; color: #9c5700; }
.sw-calc { background: #f2f2f2; border: 1px solid #7f7f7f; color: #fa7d00; font-weight: 700; padding-left: 4px; }
.sw-check { background: #a5a5a5; border: 3px double #3f3f3f; color: #fff; font-weight: 700; padding-left: 2px; line-height: 16px; }
.gallery-scroll { flex: none; width: 15px; display: grid; grid-template-rows: 1fr 1fr 1fr; border-left: 1px solid #ababab; }
.gallery-scroll button { display: grid; place-items: center; }
.gallery-scroll button + button { border-top: 1px solid #ababab; }
.collapse { position: absolute; right: 10px; bottom: 5px; }

/* Quick access bar */
.quickbar { flex: none; display: flex; align-items: center; height: 45px; padding: 0 0 11px 18px; }
.q { width: 15px; }
.q-redo { margin-left: 34px; margin-right: 9px; }
.q-undo { margin-left: 22px; margin-right: 8px; }
.q-print { margin-left: 24px; }
.q-preview { margin-left: 39px; }
.ghost { margin-left: 40px; }

/* Formula bar */
.formulabar { flex: none; display: flex; height: 28px; padding: 0 5px; }
.namebox, .fx-box, .formula { display: flex; align-items: center; background: #fff; border: 1px solid #c3c3c3; }
.namebox { width: 124px; padding: 0 5px 0 6px; }
.namebox input { flex: 1; min-width: 0; font-size: 14px; font-weight: 300; }
.namebox .caret { border-width: 4px 4px 0; }
.dots {
  flex: none;
  align-self: center;
  width: 2px;
  height: 10px;
  margin: 0 14px;
  background: repeating-linear-gradient(#aaa 0 2px, transparent 2px 4px);
}
.fx-box { width: 110px; margin-right: 3px; }
.fx-box button { display: grid; place-items: center; width: 36px; }
.fx-box .fx { display: block; color: #555; font: italic 700 14px/20px "Liberation Serif", serif; }
.fx sub { font-size: 12px; line-height: 0; vertical-align: -1px; }
.formula { flex: 1; padding: 0 3px; }
.formula input { flex: 1; }

/* Workspace */
.workspace { flex: 1; display: flex; min-height: 0; padding-top: 10px; }
.book { flex: 1; display: flex; flex-direction: column; min-width: 0; }
.sheet-row { flex: 1; display: flex; min-height: 0; }
.sheet { position: relative; flex: 1; min-width: 0; overflow: hidden; border-bottom: 1px solid #9b9b9b; }

.grid {
  width: 100%;
  table-layout: fixed;
  border-collapse: separate;
  border-spacing: 0;
  background: #fff;
  color: #000;
}
.c-head { width: 29px; }
.c-a { width: 95px; }
.c-b { width: 89px; }
.c-c { width: 114px; }
.c-d { width: 105px; }
.c-e { width: 97px; }
.c-f { width: 113px; }
.c-g { width: 106px; }
.c-h { width: 115px; }
.c-i { width: 130px; }
.c-j, .c-k { width: 127px; }
.c-l { width: 152px; }
.grid th, .grid td { padding: 0; border: solid #d4d4d4; border-width: 0 1px 1px 0; }
.grid td:last-child, .grid th:last-child { border-right-color: #9b9b9b; }
.grid th {
  background: #e6e6e6;
  color: #222;
  font: 300 15px/18px "Noto Sans CJK SC", sans-serif;
}
.grid thead th { height: 19px; padding-top: 2px; line-height: 16px; border-color: #c0c0c0; border-bottom-color: #9b9b9b; }
.grid thead .sel { background: #d2d2d2; color: #217346; box-shadow: inset 0 -1px #217346; border-bottom-color: #217346; }
.grid .corner { border-right-color: #9b9b9b; }
.corner svg { margin: 1px 0 0 14px; }
.grid tbody th { vertical-align: bottom; border-color: #c0c0c0; border-right-color: #9b9b9b; line-height: 16px; }
.grid tbody .sel { background: #d2d2d2; color: #217346; box-shadow: inset -1px 0 #217346; border-right-color: #217346; }
.grid tbody .hidden-after { position: relative; padding-bottom: 2px; }
.hidden-after::after {
  content: "";
  position: absolute;
  left: 0;
  right: 0;
  bottom: -3px;
  height: 5px;
  background: #e6e6e6;
  border: solid #c0c0c0;
  border-width: 1px 0;
}
.h30 { height: 30px; }
.h31 { height: 31px; }
.h38 { height: 38px; }
.h40 { height: 40px; }
.h44 { height: 44px; }
.h47 { height: 47px; }
.h53 { height: 53px; }
.data td { padding-bottom: 2px; text-align: center; font-size: 14px; line-height: 20px; }
.data td:nth-child(-n+8) { border-color: #000; }
.data td.title { padding-bottom: 3px; font-size: 21px; font-weight: 700; line-height: 30px; }
.data .title ~ td { border-color: #d4d4d4; }
.data .title ~ td:last-child { border-right-color: #9b9b9b; }
.data.heads td { font-size: 15px; font-weight: 700; }
.large td { text-align: center; font: 300 24px/36px "Noto Sans CJK SC", sans-serif; white-space: nowrap; }
.noted { background: linear-gradient(225deg, #c8102e 4px, transparent 4px); }
.active-cell { position: relative; }
.selection { position: absolute; inset: -2px; border: 2px solid #217346; }
.selection::after {
  content: "";
  position: absolute;
  right: -4px;
  bottom: -4px;
  width: 7px;
  height: 7px;
  border: solid #fff;
  border-width: 1px 0 0 1px;
  background: #217346;
}
.cross { position: absolute; left: 59px; top: 25px; }

.chart { position: absolute; left: 862px; top: 56px; }
.chart text { fill: #595959; text-anchor: middle; font-size: 12px; }
.chart .ct { font-size: 18px; }
.chart .ax text { font-size: 11px; text-anchor: end; }
.chart .vt text, .chart .xt { font-size: 13px; }
.chart .lg text { text-anchor: start; }

.vscroll { flex: none; display: flex; flex-direction: column; width: 15px; margin: 2px 3px 0; background: #dadada; }
.vscroll button, .hscroll button { flex: none; display: grid; place-items: center; width: 15px; height: 15px; background: #fff; border: 1px solid #ababab; }
.vthumb { height: 44%; background: #fff; border: 1px solid #ababab; }
.vtrack { flex: 1; }

/* Sheet tabs */
.sheet-tabs { flex: none; display: flex; height: 27px; font-size: 13px; line-height: 20px; }
.tab-nav { display: flex; gap: 24px; width: 101px; padding: 10px 0 0 26px; border-right: 1px solid #ababab; height: 24px; }
.st { flex: none; padding: 0 12px 2px 11px; height: 24px; border-right: 1px solid #ababab; white-space: nowrap; }
.st.last { padding-right: 10px; border-color: transparent; }
.st.current { padding: 0 14px 0 13px; background: #fff; color: #217346; border: 0; border-bottom: 2px solid #217346; }
.st.after { padding-right: 13px; }
.add-sheet { margin: 0 0 0 32px; }
.grip { margin-left: auto; }
.hscroll { flex: none; display: flex; width: 551px; height: 15px; margin: 6px 21px 0 0; background: #dadada; }
.hthumb { width: 37%; border: 1px solid #ababab; background: #fff; }
.htrack { flex: 1; }

/* Format pane */
.pane { flex: none; width: 285px; margin-bottom: 2px; padding: 13px 12px 0 13px; border-left: 1px solid #c6c6c6; }
.pane-head { display: flex; align-items: flex-start; gap: 12px; height: 29px; }
.pane-head h2 { flex: 1; margin: 0; color: #217346; font-size: 21px; line-height: 26px; font-weight: 300; }
.pane-head button { display: grid; place-items: center; height: 20px; }
.pane-icons { display: flex; height: 36px; padding-left: 5px; }
.pane-icons button { width: 41px; height: 24px; display: grid; place-items: center start; }
.pane-rule { height: 7px; margin-right: 2px; padding-left: 11px; border-bottom: 1px solid #c0c0c0; }
.options { margin: 0; padding: 6px 0 0; border: 0; }
.options + .options { margin-top: 5px; padding-top: 10px; }
.options legend { float: left; width: 100%; margin-bottom: 10px; padding-left: 22px; color: #217346; font-weight: 700; background: linear-gradient(135deg, transparent 50%, #333 50%) 8px 4px / 7px 7px no-repeat; }
.options label { clear: both; display: flex; align-items: center; gap: 6px; height: 25px; padding-left: 24px; color: #aaa; }
.options input { appearance: none; width: 10px; height: 10px; border-radius: 50%; background: #fafafa; }
.options input:checked { background: radial-gradient(circle, #b0b0b0 2px, #fafafa 3px); }

/* Status bar */
.status { flex: none; display: flex; align-items: center; height: 20px; padding: 0 20px 0 7px; background: #f1f1f1; border-top: 1px solid #c6c6c6; }
.s2 { margin-left: 16px; }
.s3 { margin: 0 18px; }
.views { display: flex; height: 100%; margin-left: auto; margin-right: 2px; }
.view { display: grid; place-items: center; width: 38px; height: 19px; }
.view.on { background: #c8c8c8; }
.zoom-btn { width: 14px; display: grid; place-items: center; }
.zoom { appearance: none; width: 101px; height: 12px; background: linear-gradient(#999, #999) center / 100% 1px no-repeat; }
.zoom::-webkit-slider-thumb { appearance: none; width: 4px; height: 11px; background: #555; }
.percent { width: 33px; margin-left: 11px; }

/* Site mark over the lower right corner */
.watermark { position: absolute; right: 7px; bottom: 6px; display: flex; align-items: flex-end; pointer-events: none; }
.watermark p { display: flex; flex-direction: column; width: 106px; margin: 0; white-space: nowrap; }
.watermark svg { margin-bottom: 2px; }
.watermark strong { color: #7aaadd; font-size: 21px; line-height: 24px; font-weight: 600; }
.watermark span { color: #6fc48a; font-size: 16px; line-height: 20px; }
```
